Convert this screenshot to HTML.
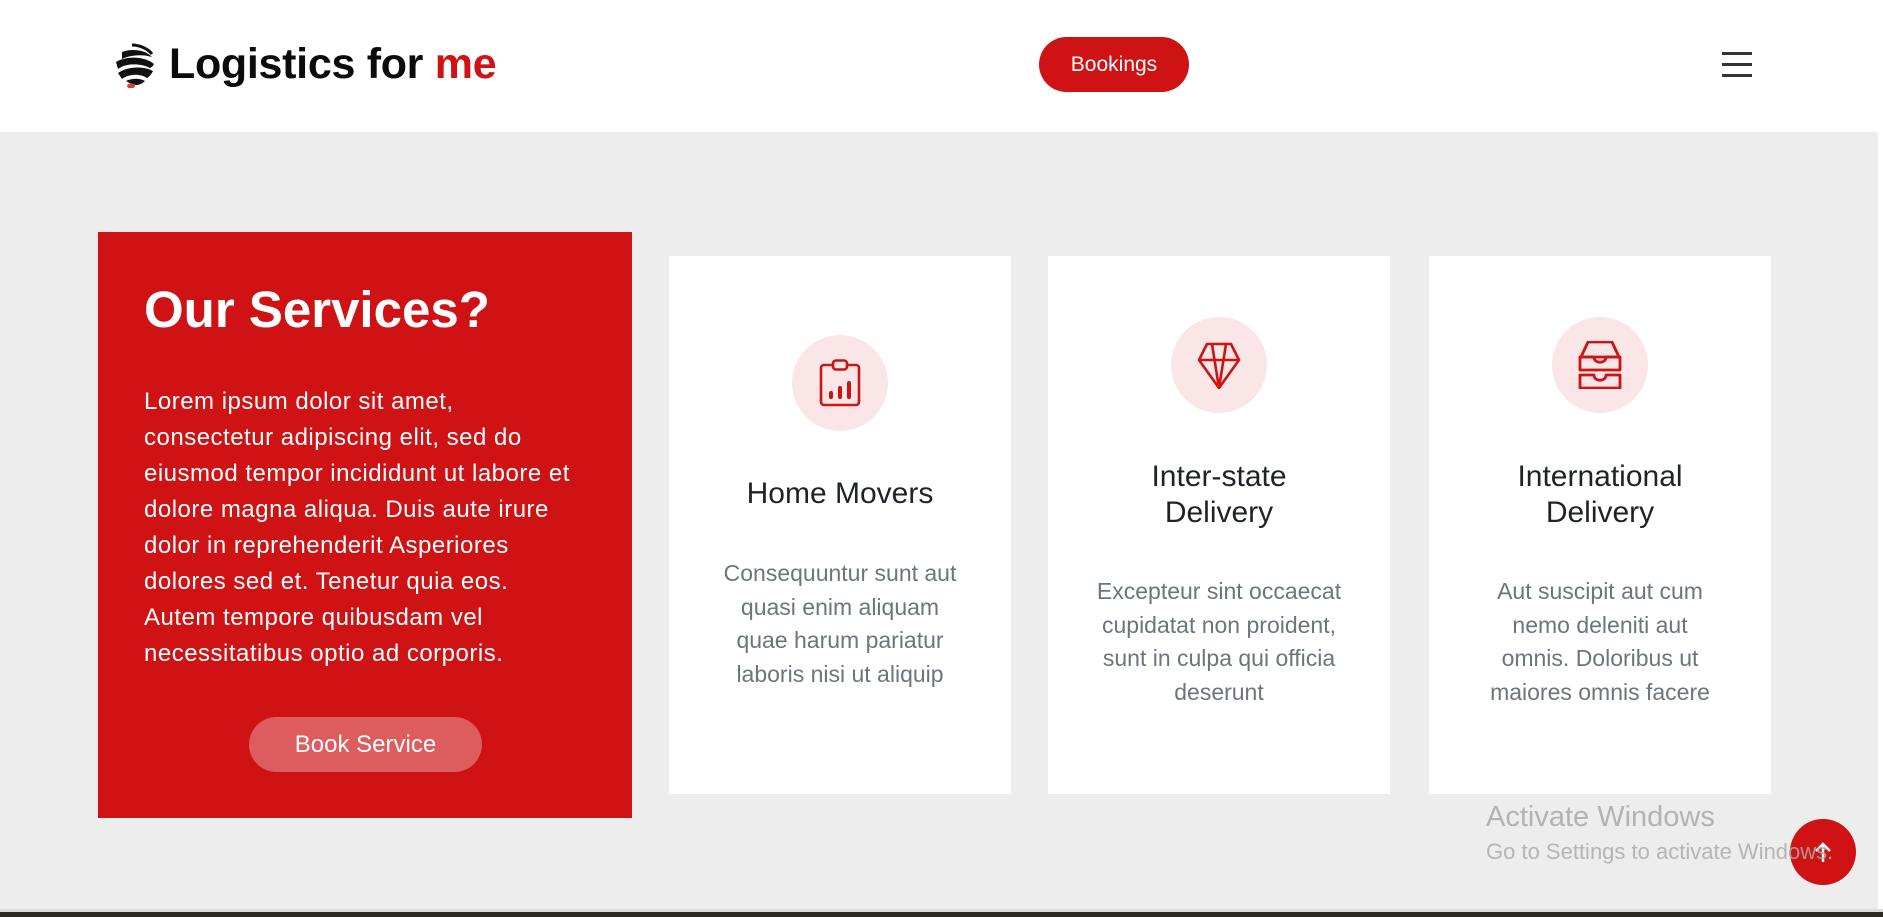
<!DOCTYPE html>
<html><head><meta charset="utf-8"><style>
*{margin:0;padding:0;box-sizing:border-box}
body{width:1883px;height:917px;overflow:hidden;background:#ededed;font-family:"Liberation Sans",sans-serif;position:relative}
.abs{position:absolute}
header{position:absolute;left:0;top:0;width:1878px;height:132px;background:#fff}
.logo{left:169px;top:40px;font-size:43px;font-weight:bold;color:#0b0b0b;letter-spacing:-0.3px;white-space:nowrap}
.logo span{color:#cf1213}
.book{left:1039px;top:37px;width:150px;height:55px;border-radius:28px;background:#cf1213;color:#fff;font-size:21px;text-align:center;line-height:55px}
.ham{left:1722px;width:30px;height:2.5px;background:#333}
.red{left:98px;top:232px;width:534px;height:586px;background:#cf1213;color:#fff}
.red h2{position:absolute;left:46px;top:48px;font-size:51px;font-weight:bold}
.red p{position:absolute;left:46px;top:383px;width:480px;font-size:24px;letter-spacing:0.5px;line-height:36px;white-space:nowrap}
.bs{position:absolute;left:151px;top:485px;width:233px;height:55px;border-radius:28px;background:#dd5c5d;font-size:24px;text-align:center;line-height:55px}
.card{top:256px;width:342px;height:538px;background:#fff}
.circ{position:absolute;left:123px;width:96px;height:96px;border-radius:50%;background:#fae6e6}
.circ svg{position:absolute;left:24px;top:24px}
.t{position:absolute;left:0;width:100%;text-align:center;font-size:30px;line-height:36px;color:#1f2328}
.d{position:absolute;left:0;width:100%;text-align:center;font-size:23px;line-height:33.5px;color:#6c757d}
</style></head><body>
<header>
<svg class="abs" style="left:112px;top:42px" width="46" height="46" viewBox="0 0 46 46">
<path d="M20 3 C28 3 36 7 40 12" stroke="#111" stroke-width="3" fill="none"/>
<path d="M10 10 C20 6 34 8 40 15 C30 12 18 13 10 17 Z" fill="#111"/>
<path d="M4 20 C16 13 34 15 42 22 C40 25 40 25 38 26 C28 21 14 21 6 27 Z" fill="#111"/>
<path d="M6 31 C16 24 32 24 41 29 C39 33 37 35 35 36 C28 31 16 32 10 37 Z" fill="#111"/>
<path d="M14 39 C20 36 28 36 33 39 C30 42 27 43 24 43 C20 42 17 41 14 39Z" fill="#111"/>
<ellipse cx="19" cy="44" rx="4" ry="2.5" fill="#e53a3a"/>
</svg>
<div class="abs logo">Logistics for <span>me</span></div>
<div class="abs book">Bookings</div>
<div class="abs ham" style="top:52px"></div>
<div class="abs ham" style="top:63px"></div>
<div class="abs ham" style="top:74px"></div>
</header>
<div class="abs" style="left:1878px;top:0;width:5px;height:912px;background:#fff"></div>

<div class="abs red">
<h2>Our Services?</h2>
<p style="top:152px">Lorem ipsum dolor sit amet,<br>consectetur adipiscing elit, sed do<br>eiusmod tempor incididunt ut labore et<br>dolore magna aliqua. Duis aute irure<br>dolor in reprehenderit Asperiores<br>dolores sed et. Tenetur quia eos.<br>Autem tempore quibusdam vel<br>necessitatibus optio ad corporis.</p>
<div class="bs">Book Service</div>
</div>

<div class="abs card" style="left:669px">
<div class="circ" style="top:79px"><svg width="48" height="48" viewBox="0 0 48 48" fill="none" stroke="#cf1213" stroke-width="2.6"><rect x="5" y="6" width="38" height="40" rx="3"/><rect x="17" y="1.5" width="14" height="9" rx="3" fill="#fae6e6"/><line x1="15" y1="38" x2="15" y2="34" stroke-width="4" stroke-linecap="round"/><line x1="24" y1="38" x2="24" y2="29" stroke-width="4" stroke-linecap="round"/><line x1="33" y1="38" x2="33" y2="24" stroke-width="4" stroke-linecap="round"/></svg></div>
<div class="t" style="top:220px">Home Movers</div>
<div class="d" style="top:301px">Consequuntur sunt aut<br>quasi enim aliquam<br>quae harum pariatur<br>laboris nisi ut aliquip</div>
</div>
<div class="abs card" style="left:1048px">
<div class="circ" style="top:61px"><svg width="48" height="48" viewBox="0 0 48 48" fill="none" stroke="#cf1213" stroke-width="2.6" stroke-linejoin="round"><path d="M12 3 H36 L44 19 L24 47 L4 19 Z"/><line x1="4" y1="19" x2="44" y2="19"/><path d="M17 3 L24 47 L31 3"/></svg></div>
<div class="t" style="top:203px">Inter-state<br>Delivery</div>
<div class="d" style="top:319px">Excepteur sint occaecat<br>cupidatat non proident,<br>sunt in culpa qui officia<br>deserunt</div>
</div>
<div class="abs card" style="left:1429px">
<div class="circ" style="top:61px"><svg width="48" height="48" viewBox="0 0 48 48" fill="none" stroke="#cf1213" stroke-width="2.8" stroke-linejoin="round"><path d="M12 1 H36 L43 16 H5 Z"/><path d="M4 16 V29 H44 V16 H30 C30 23 18 23 18 16 Z"/><path d="M4 34 H18 C18 41 30 41 30 34 H44 V47 H4 Z"/></svg></div>
<div class="t" style="top:203px">International<br>Delivery</div>
<div class="d" style="top:319px">Aut suscipit aut cum<br>nemo deleniti aut<br>omnis. Doloribus ut<br>maiores omnis facere</div>
</div>

<div class="abs" style="left:1790px;top:819px;width:66px;height:66px;border-radius:50%;background:#cf1213"></div>
<svg class="abs" style="left:1812px;top:840px" width="22" height="24" viewBox="0 0 22 24" fill="none" stroke="#fff" stroke-width="2.5"><path d="M11 22 V4 M4 11 L11 4 L18 11"/></svg>
<div class="abs" style="left:1486px;top:801px;font-size:29px;color:#b3b3b3">Activate Windows</div>
<div class="abs" style="left:1486px;top:839px;font-size:22px;color:rgba(170,170,170,0.85)">Go to Settings to activate Windows.</div>
<div class="abs" style="left:0;top:909px;width:1883px;height:3px;background:#dcdcdc"></div>
<div class="abs" style="left:0;top:912px;width:1883px;height:5px;background:#2e2a26"></div>
</body></html>
